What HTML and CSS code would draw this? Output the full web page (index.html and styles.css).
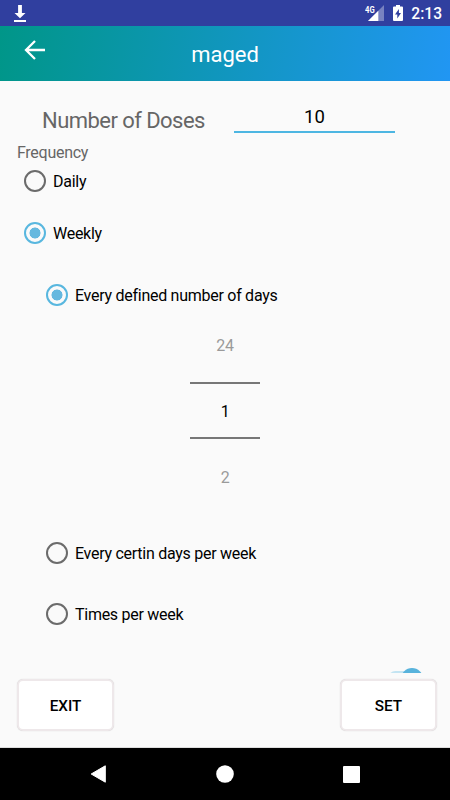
FILE: index.html
```html
<!DOCTYPE html>
<html lang="en">

<head>
    <meta charset="UTF-8">
    <meta name="viewport" content="width=device-width, initial-scale=1.0">
    <title>maged</title>
    <link rel="stylesheet" href="styles.css">
</head>

<body>
    <div class="status-bar">
        <svg class="download" width="14" height="18" viewBox="0 0 14 18">
            <path d="M5.1 0h3.8v8h3.6L7 13.3 1.5 8h3.6z" fill="#fff" />
            <path d="M1 15h12v2H1z" fill="#fff" />
        </svg>
        <div class="status-right">
            <svg width="20" height="18" viewBox="0 0 20 18">
                <path d="M19 0v16H3z" fill="#fff" opacity="0.35" />
                <path d="M13.3 5.7V16H3z" fill="#fff" />
                <text x="0" y="7.6" class="network" textLength="9.6" lengthAdjust="spacingAndGlyphs">4G</text>
            </svg>
            <svg class="battery" width="10" height="17" viewBox="0 0 10 17">
                <path d="M3 0h4v1.5h2q1 0 1 1V15q0 1-1 1H1q-1 0-1-1V2.5q0-1 1-1h2z" fill="#fff" />
                <path d="M5.9 4L2 9.5h2.3v4L8 8H5.9z" fill="#303f9f" />
            </svg>
            <span class="time">2:13</span>
        </div>
    </div>

    <header class="toolbar">
        <svg class="back" width="22" height="20" viewBox="0 0 22 20">
            <path d="M21 10H2M11 1L2 10l9 9" fill="none" stroke="#fff" stroke-width="2.3" />
        </svg>
        <h1>maged</h1>
    </header>

    <main class="content">
        <div class="doses">
            <label for="doses">Number of Doses</label>
            <input id="doses" type="text" value="10">
        </div>
        <p class="section-title">Frequency</p>
        <div class="radio daily"><span class="circle"></span>Daily</div>
        <div class="radio weekly"><span class="circle checked"></span>Weekly</div>
        <div class="weekly-options">
            <div class="radio"><span class="circle checked"></span>Every defined number of days</div>
            <div class="number-picker">
                <div class="picker-side">24</div>
                <div class="picker-value">1</div>
                <div class="picker-side">2</div>
            </div>
            <div class="radio"><span class="circle"></span>Every certin days per week</div>
            <div class="radio times"><span class="circle"></span>Times per week</div>
        </div>
        <div class="switch"><span class="thumb"></span></div>
    </main>

    <footer class="actions">
        <button>EXIT</button>
        <button>SET</button>
    </footer>

    <nav class="nav-bar">
        <svg width="17" height="20" viewBox="0 0 17 20">
            <path d="M15.3 1.8v16.4L1.2 10z" fill="#fff" stroke="#fff" stroke-width="1" stroke-linejoin="round" />
        </svg>
        <svg width="18" height="18" viewBox="0 0 18 18">
            <circle cx="9" cy="9" r="8.8" fill="#fff" />
        </svg>
        <svg width="17" height="17" viewBox="0 0 17 17">
            <rect width="17" height="17" rx="1" fill="#fff" />
        </svg>
    </nav>
</body>

</html>
```
FILE: styles.css
```css
* {
    box-sizing: border-box;
}

body {
    margin: 0;
    height: 800px;
    display: flex;
    flex-direction: column;
    overflow: hidden;
    font-family: Roboto, sans-serif;
    font-size: 16px;
    letter-spacing: -0.27px;
    color: #000;
    background-color: #fafafa;
}

svg {
    display: block;
}

.status-bar {
    height: 26px;
    padding: 0 8px 0 13px;
    display: flex;
    justify-content: space-between;
    align-items: flex-start;
    background-color: #303f9f;
    color: #fff;
    letter-spacing: normal;
}

.download {
    margin-top: 5px;
}

.status-right {
    display: flex;
    padding-top: 5px;
}

.network {
    font-size: 8.5px;
    font-weight: 700;
    fill: #fff;
}

.battery {
    margin-left: 8px;
}

.time {
    margin-left: 8px;
    font-size: 15.6px;
    font-weight: 500;
    line-height: 19px;
}

.toolbar {
    height: 55px;
    display: grid;
    grid-template-columns: 48px 1fr 48px;
    background: linear-gradient(100deg, #009688, #2196f3);
    color: #fff;
}

.back {
    margin: 14px 0 0 24px;
}

h1 {
    margin: 0;
    font-size: 22px;
    font-weight: 400;
    letter-spacing: normal;
    line-height: 57px;
    text-align: center;
}

.content {
    height: 592px;
    overflow: hidden;
}

.doses {
    display: flex;
    height: 60px;
    padding: 23px 0 0 42px;
    color: #666;
}

.doses label {
    width: 192px;
    font-size: 22px;
    letter-spacing: -0.55px;
    line-height: 34px;
}

.doses input {
    width: 161px;
    height: 29px;
    padding: 0 0 1px;
    border: none;
    border-bottom: 2px solid #4db6e2;
    outline: none;
    background: none;
    font: 18.5px Roboto, sans-serif;
    color: #000;
    text-align: center;
}

.section-title {
    margin: 0 0 0 17px;
    color: #666;
    line-height: 23px;
}

.radio {
    display: flex;
    align-items: flex-start;
    height: 22px;
    gap: 7px;
    line-height: 24px;
}

.circle {
    width: 22px;
    height: 22px;
    border: 2px solid #6b6b6b;
    border-radius: 50%;
}

.circle.checked {
    border-color: #58b7df;
    background: radial-gradient(circle, #65b8df 5.2px, transparent 5.8px);
}

.daily {
    margin: 6px 0 0 24px;
}

.weekly {
    margin: 30px 0 0 24px;
}

.weekly-options {
    margin: 40px 0 0 46px;
}

.number-picker {
    width: 70px;
    margin: 13px 0 40px 144px;
    text-align: center;
}

.picker-side {
    height: 63px;
    line-height: 54px;
    color: #9a9a9a;
}

.picker-value {
    height: 57px;
    border: solid #777;
    border-width: 2px 0;
    line-height: 55px;
}

.picker-side:last-child {
    line-height: 77px;
}

.times {
    margin-top: 39px;
}

.switch {
    width: 36px;
    height: 15px;
    margin: 46px 0 0 388px;
    border-radius: 8px;
    background-color: #c3e4f2;
}

.thumb {
    display: block;
    width: 22px;
    height: 22px;
    margin-left: 13px;
    position: relative;
    top: -3px;
    border-radius: 50%;
    background-color: #58b3dc;
}

.actions {
    height: 75px;
    padding: 6px 13px 0 17px;
    display: flex;
    justify-content: space-between;
    border-bottom: 1px solid #ddd;
}

.actions button {
    width: 97px;
    height: 52px;
    padding: 1px 0 0;
    border: 2px solid #eee8ea;
    border-radius: 6px;
    background-color: #fff;
    box-shadow: 0 0 1px rgba(0, 0, 0, 0.2);
    font: 500 15.3px Roboto, sans-serif;
    color: #000;
}

.nav-bar {
    height: 52px;
    padding: 0 90px;
    display: flex;
    justify-content: space-between;
    align-items: center;
    background-color: #000;
}
```
